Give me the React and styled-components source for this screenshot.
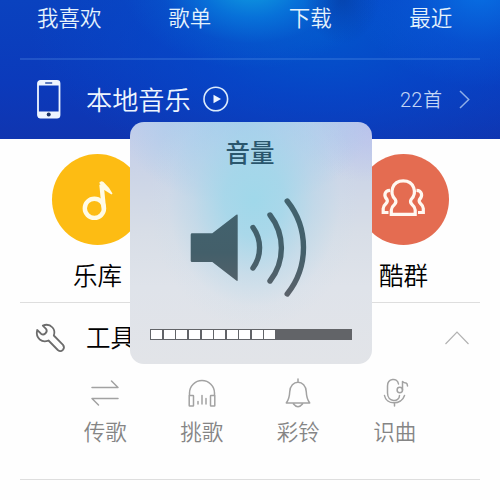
import React from "react";
import styled, { createGlobalStyle } from "styled-components";

const GlobalStyle = createGlobalStyle`
  * { box-sizing: border-box; }
  body { margin: 0; background: #fff; font-family: "Noto Sans CJK SC DemiLight", "Noto Sans CJK SC", sans-serif; font-weight: 350; }
  svg { display: block; flex: none; overflow: visible; }
`;

const Screen = styled.main`
  position: relative;
  width: 500px;
  height: 500px;
  overflow: hidden;
  background: #fefefe;
`;

const Hero = styled.header`
  height: 139px;
  background:
    radial-gradient(ellipse 38px 46px at 342px -2px, rgba(4, 55, 150, 0.5), rgba(4, 60, 165, 0.3) 50%, transparent),
    radial-gradient(ellipse 130px 85px at 252px -16px, #10a2e2 0%, rgba(8, 125, 222, 0.75) 40%, rgba(8, 100, 210, 0.3) 70%, transparent 100%),
    radial-gradient(ellipse 130px 95px at 480px -8px, rgba(8, 115, 230, 0.9), rgba(8, 95, 220, 0.4) 55%, transparent),
    radial-gradient(ellipse 290px 140px at 320px 35px, rgba(2, 86, 205, 0.9), rgba(4, 75, 205, 0.6) 45%, transparent),
    linear-gradient(#0a42bf, #0b3abb 60%, #1035b0);
`;

const HeroTabs = styled.nav`
  display: grid;
  grid-template-columns: repeat(4, 1fr);
  height: 58px;
  padding: 1px 9px 0;
`;

const HeroTab = styled.span`
  font-size: 21.5px;
  line-height: 32px;
  text-align: center;
  color: #e4f2fc;
`;

const LocalRow = styled.div`
  display: flex;
  align-items: center;
  height: 81px;
  margin: 0 20px;
  padding: 0 10px 0 17px;
  border-top: 2px solid rgba(110, 165, 240, 0.24);
  color: #eef5fe;
`;

const LocalTitle = styled.span`
  margin: -2px 12px 0 25px;
  font-size: 26.2px;
  line-height: 36px;
`;

const SongCount = styled.span`
  display: flex;
  align-items: baseline;
  gap: 1px;
  margin: -1px 17px 0 auto;
  font-size: 18.8px;
  line-height: 28px;
  color: #c3d5f5;
`;

const Digits = styled.span`
  font-family: Roboto, sans-serif;
  font-size: 20px;
  font-weight: 300;
`;

const Channels = styled.section`
  display: flex;
  justify-content: space-between;
  height: 163px;
  padding: 15px 51px 0 52px;
`;

const Channel = styled.div`
  display: flex;
  flex-direction: column;
  align-items: center;
  width: 91px;
`;

const ChannelDisc = styled.div`
  display: flex;
  align-items: center;
  justify-content: center;
  width: 91px;
  height: 91px;
  border-radius: 50%;
  background: ${(p) => p.$color};
`;

const ChannelName = styled.span`
  margin-top: 12px;
  font-size: 24.5px;
  line-height: 36px;
  color: #000;
`;

const ToolsSection = styled.section`
  height: 178px;
  margin: 0 20px;
  border-top: 1px solid #dedede;
  border-bottom: 1px solid #dedede;
`;

const ToolsHeader = styled.div`
  display: flex;
  align-items: center;
  height: 70px;
  padding: 0 11px 0 15px;
`;

const ToolsTitle = styled.span`
  margin: -2px auto 0 20px;
  font-size: 24.5px;
  line-height: 36px;
  color: #000;
`;

const ToolGrid = styled.div`
  display: grid;
  grid-template-columns: repeat(4, 96.5px);
  margin-left: 37px;
`;

const Tool = styled.div`
  display: flex;
  flex-direction: column;
  align-items: center;
  padding-top: 4px;
`;

const ToolName = styled.span`
  margin-top: 6px;
  font-size: 21.5px;
  line-height: 32px;
  color: #858585;
`;

const VolumePanel = styled.aside`
  position: absolute;
  left: 130px;
  top: 122px;
  display: flex;
  flex-direction: column;
  align-items: center;
  width: 242px;
  height: 242px;
  border-radius: 14px;
  background:
    radial-gradient(ellipse 105px 130px at 124px 78px, rgba(160, 216, 234, 1) 0%, rgba(163, 215, 234, 0.88) 28%, rgba(178, 215, 234, 0.48) 58%, rgba(200, 222, 236, 0.15) 82%, transparent 100%),
    radial-gradient(ellipse 125px 85px at 115px 0, rgba(155, 202, 238, 1), rgba(165, 205, 236, 0.6) 55%, transparent),
    radial-gradient(ellipse 80px 60px at 242px 0, rgba(184, 194, 236, 0.9), transparent),
    linear-gradient(#c2cceb 0%, #ccd5e7 22%, #d8dee7 46%, #dfe3ea 68%, #e2e4e8 100%);
`;

const VolumeTitle = styled.h1`
  margin: 12px 2px 0 0;
  font-family: "Noto Sans CJK SC", sans-serif;
  font-size: 24.5px;
  font-weight: 500;
  line-height: 36px;
  color: #2a566d;
`;

const SpeakerArt = styled.svg`
  margin: 27px 2px 0 0;
`;

const Meter = styled.div`
  display: flex;
  gap: 1.55px;
  width: 202px;
  height: 11px;
  margin-top: 31px;
  padding: 1px 1.4px;
  background: #626468;
`;

const MeterCell = styled.i`
  width: 11px;
  height: 9px;
  background: #fff;
`;

const PhoneIcon = () => (
  <svg width="24" height="39" viewBox="0 0 24 39">
    <rect x="1" y="1" width="21.5" height="36.5" rx="2.5" fill="none" stroke="#eef5ff" strokeWidth="1.8" />
    <path d="M1 1.500h21.500v4H1zM1 31.500h21.500v6H1z" fill="#eef5ff" />
    <path d="M8.200 3h7" stroke="#2c52a8" strokeWidth="1.5" />
    <circle cx="11.7" cy="34.500" r="2" fill="#1b3264" />
  </svg>
);

const PlayIcon = () => (
  <svg width="26" height="26" viewBox="0 0 26 26">
    <circle cx="12.800" cy="12" r="11.8" fill="none" stroke="#dcebfb" strokeWidth="1.6" />
    <path d="M10.500 7.800v8.400l7.500-4.200z" fill="#eef5ff" />
  </svg>
);

const NextIcon = () => (
  <svg width="11" height="19" viewBox="0 0 11 19">
    <path d="m1 1 8.700 8.500L1 18" fill="none" stroke="#8fafe8" strokeWidth="1.500" />
  </svg>
);

const NoteIcon = () => (
  <svg width="91" height="91" viewBox="0 0 91 91" fill="none" stroke="#fffbe6" strokeWidth="4.4">
    <circle cx="42.400" cy="54.300" r="9.600" />
    <path d="M51.900 55 49.500 30.500" />
    <path d="M47.200 28.800Q49 26 51.500 28Q57.500 33.500 60.500 39.500L59.500 40.500L51.500 35.500Z" fill="#fffbe6" stroke="none" />
  </svg>
);

const GroupIcon = () => (
  <svg width="91" height="91" viewBox="0 0 91 91" fill="none" stroke="#fff8f1" strokeWidth="3.2">
    <path d="M33.300 60.300V56Q33.500 53 36.500 50.500Q38.800 48 37.300 45.500C31 39 34 26.800 45.200 26.800S59.400 39 53.100 45.500Q51.600 48 54 50.500Q57 53 57.200 56V60.300Z" />
    <path d="M32 36.300C26.300 36.500 25.500 42 29 45.500Q30 47.500 28 49.500Q25.300 52 25.200 54.500V58.500H30.500M58.500 36.300C64.200 36.500 65 42 61.500 45.500Q60.500 47.500 62.500 49.500Q65.200 52 65.300 54.500V58.500H60" />
  </svg>
);

const WrenchIcon = () => (
  <svg width="31" height="31" viewBox="0 0 31 31" fill="none" stroke="#6c6c6c" strokeWidth="1.8" strokeLinejoin="round">
    <path d="M7.800 2.600Q13.500 .2 17.500 4.500Q20.500 8 18.800 12.500L28 21.900Q30 24.500 27.900 26.900Q25.500 29.300 22.800 27L13.500 17.500Q8.500 19.500 4.800 16.500Q.7 12.800 2.200 7L6 10.700Q8.200 12.500 10.300 10.500Q12.800 8.200 11 5.800Z" />
  </svg>
);

const CollapseIcon = () => (
  <svg width="24" height="14" viewBox="0 0 24 14">
    <path d="M.5 13 12 1l11.500 12" fill="none" stroke="#b2b2b2" strokeWidth="1.200" />
  </svg>
);

const ToolIcon = ({ children }) => (
  <svg width="32" height="32" viewBox="0 0 32 32" fill="none" stroke="#a2a2a2" strokeWidth="1.500" strokeLinecap="round" strokeLinejoin="round">
    {children}
  </svg>
);

const transferArt = <path d="M3 10.500h26l-6.500-6.500M29 21.500H3l6.500 6.500" />;

const headphoneArt = (
  <>
    <path d="M3.500 18.500V16a12.500 12.500 0 0 1 25 0v2.500" />
    <rect x="3.200" y="18.500" width="4.300" height="10.500" rx=".5" />
    <rect x="24.500" y="18.500" width="4.300" height="10.500" rx=".5" />
    <path d="M12 24.500v2.500M16 18.500v8.500M20 21.500v5.500" />
  </>
);

const bellArt = (
  <path d="M16 2v3M4.300 26h23.400Q24.500 21.500 24.300 15C24 2 8 2 7.700 15Q7.500 21.500 4.300 26ZM11.500 27q4.500 5.500 9 0" />
);

const micArt = (
  <>
    <path d="M19.500 7C18.500 .5 8.500 1 8.500 9V16C8.500 25.500 20.500 25.500 20.500 18.500" />
    <circle cx="20.800" cy="13" r="2.700" />
    <path d="M23.500 13V4.500q1.500 1.500 3.500 1.500q1.500 .5 1.500 3M5.500 18.500C7 28 22.500 28.500 25.500 18.500M15.500 26v3" />
  </>
);

const tabs = ["我喜欢", "歌单", "下载", "最近"];

const channels = [
  { name: "乐库", color: "#fdbc13", icon: <NoteIcon /> },
  { name: "酷群", color: "#e46c51", icon: <GroupIcon /> },
];

const tools = [
  { name: "传歌", art: transferArt },
  { name: "挑歌", art: headphoneArt },
  { name: "彩铃", art: bellArt },
  { name: "识曲", art: micArt },
];

const VOLUME = 10;

export default function App() {
  return (
    <Screen>
      <GlobalStyle />
      <Hero>
        <HeroTabs>
          {tabs.map((name) => (
            <HeroTab key={name}>{name}</HeroTab>
          ))}
        </HeroTabs>
        <LocalRow>
          <PhoneIcon />
          <LocalTitle>本地音乐</LocalTitle>
          <PlayIcon />
          <SongCount>
            <Digits>22</Digits>首
          </SongCount>
          <NextIcon />
        </LocalRow>
      </Hero>
      <Channels>
        {channels.map(({ name, color, icon }) => (
          <Channel key={name}>
            <ChannelDisc $color={color}>{icon}</ChannelDisc>
            <ChannelName>{name}</ChannelName>
          </Channel>
        ))}
      </Channels>
      <ToolsSection>
        <ToolsHeader>
          <WrenchIcon />
          <ToolsTitle>工具</ToolsTitle>
          <CollapseIcon />
        </ToolsHeader>
        <ToolGrid>
          {tools.map(({ name, art }) => (
            <Tool key={name}>
              <ToolIcon>{art}</ToolIcon>
              <ToolName>{name}</ToolName>
            </Tool>
          ))}
        </ToolGrid>
      </ToolsSection>
      <VolumePanel>
        <VolumeTitle>音量</VolumeTitle>
        <SpeakerArt width="120" height="101" viewBox="190 197 120 101">
          <defs>
            <linearGradient id="ink" x1="0" y1="197" x2="0" y2="298" gradientUnits="userSpaceOnUse">
              <stop offset="0" stopColor="#42636f" />
              <stop offset=".55" stopColor="#435f6a" />
              <stop offset="1" stopColor="#5c626a" />
            </linearGradient>
          </defs>
          <path d="M192 233.300h20.300l24-18.500q1.400-1 1.400.6v64.500q0 1.800-1.400.7L212.300 262H192q-1.300 0-1.300-1.300v-26q0-1.400 1.300-1.400Z" fill="url(#ink)" />
          <path d="M253 227.500a34.500 34.500 0 0 1 0 40.500M270 215a53.500 53.500 0 0 1 0 66M287.200 201a74.500 74.500 0 0 1 0 93" fill="none" stroke="url(#ink)" strokeWidth="5.400" strokeLinecap="round" />
        </SpeakerArt>
        <Meter>
          {Array.from({ length: VOLUME }, (_, i) => (
            <MeterCell key={i} />
          ))}
        </Meter>
      </VolumePanel>
    </Screen>
  );
}
